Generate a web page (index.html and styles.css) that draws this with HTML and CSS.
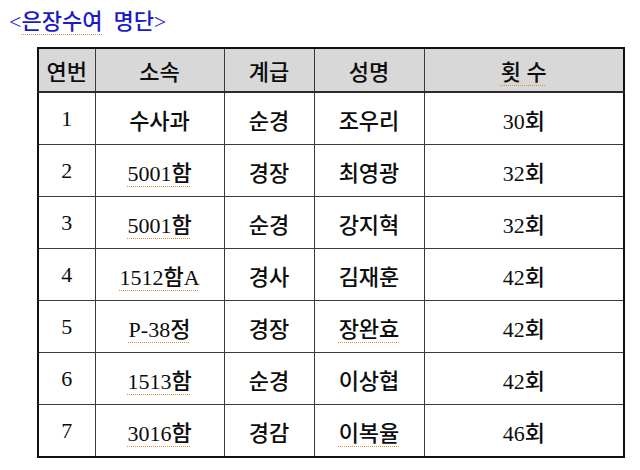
FILE: index.html
```html
<!DOCTYPE html>
<html lang="ko">
<head>
<meta charset="utf-8">
<title>은장수여 명단</title>
<link rel="stylesheet" href="styles.css">
</head>
<body>
<h1 class="title">&lt;<span class="spell">은장수여</span>&nbsp; 명단&gt;</h1>
<table class="list">
  <colgroup>
    <col class="c1"><col class="c2"><col class="c3"><col class="c4"><col class="c5">
  </colgroup>
  <thead>
    <tr><th>연번</th><th>소속</th><th>계급</th><th>성명</th><th><span class="spell">횟 수</span></th></tr>
  </thead>
  <tbody>
    <tr><td>1</td><td>수사과</td><td>순경</td><td>조우리</td><td>30회</td></tr>
    <tr><td>2</td><td><span class="spell">5001함</span></td><td>경장</td><td>최영광</td><td>32회</td></tr>
    <tr><td>3</td><td><span class="spell">5001함</span></td><td>순경</td><td>강지혁</td><td>32회</td></tr>
    <tr><td>4</td><td><span class="spell">1512함A</span></td><td>경사</td><td>김재훈</td><td>42회</td></tr>
    <tr><td>5</td><td><span class="spell">P-38정</span></td><td>경장</td><td><span class="spell">장완효</span></td><td>42회</td></tr>
    <tr><td>6</td><td><span class="spell">1513함</span></td><td>순경</td><td>이상협</td><td>42회</td></tr>
    <tr><td>7</td><td><span class="spell">3016함</span></td><td>경감</td><td><span class="spell">이복율</span></td><td>46회</td></tr>
  </tbody>
</table>
</body>
</html>
```
FILE: styles.css
```css
html, body {
  margin: 0;
  padding: 0;
  background: #ffffff;
}
body {
  width: 640px;
  height: 470px;
  overflow: hidden;
  font-family: "Liberation Serif", "Noto Sans CJK KR", serif;
  color: #111111;
}
.title {
  margin: 0;
  padding: 8px 0 0 9px;
  height: 47px;
  box-sizing: border-box;
  font-size: 22px;
  line-height: 28px;
  font-weight: 500;
  color: #1b1bc4;
}
.spell {
  text-decoration-line: underline;
  text-decoration-style: dotted;
  text-decoration-color: #e0902e;
  text-decoration-thickness: 1px;
  text-underline-offset: 5px;
}
.list {
  margin-left: 37px;
  border-collapse: collapse;
  table-layout: fixed;
  width: 586px;
  border: 2px solid #111111;
  font-size: 22px;
}
.c1 { width: 57px; }
.c2 { width: 129px; }
.c3 { width: 90px; }
.c4 { width: 110px; }
.c5 { width: 200px; }
.list th, .list td {
  border: 1px solid #3a3a3a;
  text-align: center;
  vertical-align: middle;
  padding: 0;
  font-weight: 500;
  color: #0d0d0d;
}
.list th {
  background: #d8d8d8;
  height: 42px;
}
.list td {
  height: 51px;
}
.list thead tr {
  border-bottom: 2px solid #2a2a2a;
}
```
